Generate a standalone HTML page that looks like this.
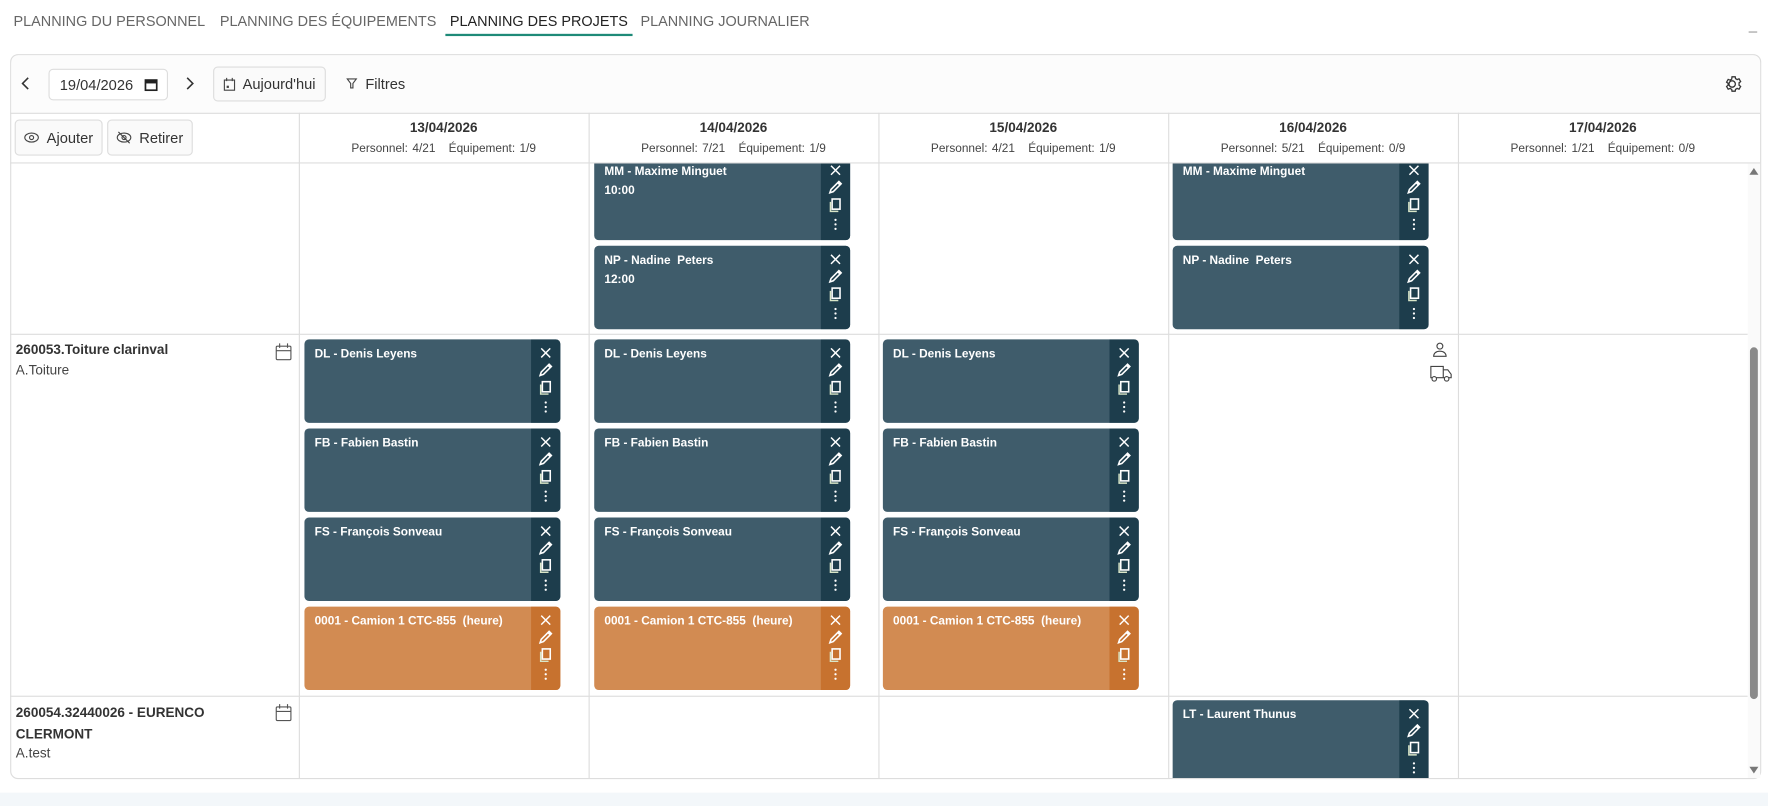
<!DOCTYPE html>
<html><head><meta charset="utf-8"><style>
*{box-sizing:border-box;margin:0;padding:0}
html,body{width:1768px;height:806px;overflow:hidden;background:#fff;font-family:"Liberation Sans",Arial,sans-serif}
#s{position:absolute;left:0;top:0;width:1568px;height:715px;transform:scale(1.12755);transform-origin:0 0;background:#fff}
.a{position:absolute}
.tab{position:absolute;top:11px;font-size:12.8px;color:#666;letter-spacing:0}
.btn{position:absolute;border:1px solid #ddd;border-radius:4px;background:#fafafa;font-size:13px;color:#333;display:flex;align-items:center;justify-content:center;gap:6px}
.vl{position:absolute;top:100px;width:1px;height:590px;background:#ddd}
.hl{position:absolute;left:9px;height:1px;background:#ddd}
.dh{position:absolute;top:100px;width:257px;text-align:center}
.dh b{display:block;font-size:12px;color:#333;margin-top:6px}
.dh span{display:block;font-size:10.5px;color:#444;margin-top:6px;word-spacing:1px}
.card{position:absolute;width:227px;height:74px;background:#3f5c6b;border-radius:4px;overflow:hidden;color:#fff;font-size:10.5px;font-weight:bold}
.card .t{position:absolute;left:9px;top:7px}
.card .h{position:absolute;left:9px;top:24px}
.card .st{position:absolute;right:0;top:0;width:26px;height:100%;background:#1d3d4c}
.card.o{background:#d28b52}
.card.o .st{background:#c7722f}
.st svg{position:absolute;left:6px}
</style></head><body><div id="s">
<div class="tab" style="left:12px">PLANNING DU PERSONNEL</div>
<div class="tab" style="left:195px">PLANNING DES ÉQUIPEMENTS</div>
<div class="tab" style="left:399px;color:#222">PLANNING DES PROJETS</div>
<div class="a" style="left:395px;top:30px;width:166px;height:2px;background:#1e8a78"></div>
<div class="tab" style="left:568px">PLANNING JOURNALIER</div>
<div class="a" style="left:1551px;top:14px;font-size:13px;color:#888">_</div>
<div class="a" style="left:0;top:703px;width:1568px;height:12px;background:#f3f7fa"></div>
<div class="a" style="left:9px;top:48px;width:1553px;height:643px;border:1px solid #ddd;border-radius:7px;background:#fff"></div>
<div class="a" style="left:10px;top:49px;width:1551px;height:51px;background:#fcfcfc;border-radius:7px 7px 0 0"></div>
<svg class="a" style="left:17px;top:67px" width="12" height="14"><path d="M8 2 L3 7 L8 12" fill="none" stroke="#333" stroke-width="1.4"/></svg>
<div class="btn" style="left:43px;top:61px;width:106px;height:28px;justify-content:flex-start;padding-left:9px;background:#fff">19/04/2026<svg width="12" height="12" style="margin-left:4px"><rect x="1" y="2" width="10" height="9" fill="none" stroke="#222" stroke-width="1.5"/><rect x="1" y="2" width="10" height="3" fill="#222"/></svg></div>
<svg class="a" style="left:162px;top:67px" width="12" height="14"><path d="M4 2 L9 7 L4 12" fill="none" stroke="#333" stroke-width="1.4"/></svg>
<div class="btn" style="left:189px;top:59px;width:100px;height:31px"><svg width="11" height="12"><rect x="1" y="2" width="9" height="9" fill="none" stroke="#444"/><path d="M3 0v3M8 0v3" stroke="#444"/><rect x="3" y="7" width="2" height="2" fill="#444"/></svg>Aujourd'hui</div>
<div class="a" style="left:307px;top:67px;font-size:13px;color:#333"><svg width="10" height="10" style="margin-right:7px"><path d="M1 1h8L6 5v4H4V5z" fill="none" stroke="#444"/></svg>Filtres</div>
<svg class="a" style="left:1529px;top:66px" width="17" height="17" viewBox="0 0 24 24"><path d="M12 8a4 4 0 100 8 4 4 0 000-8zm8.6 5.5l2 1.5-2 3.5-2.4-1a8 8 0 01-2 1.2L15.8 21h-4l-.4-2.3a8 8 0 01-2-1.2l-2.4 1-2-3.5 2-1.5a8 8 0 010-2.3l-2-1.5 2-3.5 2.4 1a8 8 0 012-1.2L11.8 3h4l.4 2.3a8 8 0 012 1.2l2.4-1 2 3.5-2 1.5a8 8 0 010 2.3z" fill="none" stroke="#333" stroke-width="1.6" transform="translate(-1.8 0)"/></svg>
<div class="hl" style="top:100px;width:1552px"></div>
<div class="hl" style="top:144px;width:1552px"></div>
<div class="btn" style="left:13px;top:106px;width:78px;height:32px"><svg width="14" height="10"><ellipse cx="7" cy="5" rx="6" ry="4" fill="none" stroke="#444"/><circle cx="7" cy="5" r="1.8" fill="none" stroke="#444"/></svg>Ajouter</div>
<div class="btn" style="left:95px;top:106px;width:76px;height:32px"><svg width="14" height="12"><ellipse cx="7" cy="6" rx="6" ry="4" fill="none" stroke="#444"/><circle cx="7" cy="6" r="1.8" fill="none" stroke="#444"/><path d="M2 1l10 10" stroke="#444"/></svg>Retirer</div>
<div class="vl" style="left:265px"></div><div class="vl" style="left:522px"></div><div class="vl" style="left:779px"></div><div class="vl" style="left:1036px"></div><div class="vl" style="left:1293px"></div>
<div class="dh" style="left:265px"><b>13/04/2026</b><span>Personnel: 4/21 &nbsp; Équipement: 1/9</span></div>
<div class="dh" style="left:522px"><b>14/04/2026</b><span>Personnel: 7/21 &nbsp; Équipement: 1/9</span></div>
<div class="dh" style="left:779px"><b>15/04/2026</b><span>Personnel: 4/21 &nbsp; Équipement: 1/9</span></div>
<div class="dh" style="left:1036px"><b>16/04/2026</b><span>Personnel: 5/21 &nbsp; Équipement: 0/9</span></div>
<div class="dh" style="left:1293px"><b>17/04/2026</b><span>Personnel: 1/21 &nbsp; Équipement: 0/9</span></div>
<div class="hl" style="top:296px;width:1541px"></div>
<div class="hl" style="top:617px;width:1541px"></div>
<div class="a" style="left:1550px;top:145px;width:11px;height:545px;background:#fafafa"></div>
<svg class="a" style="left:1551px;top:148px" width="9" height="8"><path d="M0.5 7L4.5 1L8.5 7z" fill="#777"/></svg>
<svg class="a" style="left:1551px;top:679px" width="9" height="8"><path d="M0.5 1L4.5 7L8.5 1z" fill="#777"/></svg>
<div class="a" style="left:1552px;top:308px;width:7px;height:312px;background:#8a8a8a;border-radius:4px"></div>
<div class="a" style="left:14px;top:303px;font-size:12px;font-weight:bold;color:#333">260053.Toiture clarinval</div>
<div class="a" style="left:14px;top:321px;font-size:12px;color:#444">A.Toiture</div>
<div class="a" style="left:14px;top:623px;font-size:12px;font-weight:bold;color:#333;line-height:19px">260054.32440026 - EURENCO<br>CLERMONT</div>
<div class="a" style="left:14px;top:661px;font-size:12px;color:#444">A.test</div>
<svg class="a" style="left:244px;top:304px" width="15" height="16"><rect x="1" y="3" width="13" height="12" rx="1" fill="none" stroke="#555"/><path d="M1 7h13M4 0.5v4M11 0.5v4" stroke="#555"/></svg>
<svg class="a" style="left:244px;top:624px" width="15" height="16"><rect x="1" y="3" width="13" height="12" rx="1" fill="none" stroke="#555"/><path d="M1 7h13M4 0.5v4M11 0.5v4" stroke="#555"/></svg>
<svg class="a" style="left:1270px;top:303px" width="14" height="14"><circle cx="7" cy="4" r="2.6" fill="none" stroke="#444"/><path d="M1.5 13c0-3 2.5-4.5 5.5-4.5s5.5 1.5 5.5 4.5z" fill="none" stroke="#444"/></svg>
<svg class="a" style="left:1268px;top:324px" width="20" height="15"><path d="M1 1h11v10H1zM12 4h4l3 4v3h-7" fill="none" stroke="#444"/><circle cx="4" cy="12" r="2" fill="#fff" stroke="#444"/><circle cx="15" cy="12" r="2" fill="#fff" stroke="#444"/></svg>
<div class="a" style="left:10px;top:145px;width:1540px;height:545px;overflow:hidden">
<div id="cards" style="position:absolute;left:-10px;top:-145px"></div>
</div>
</div>
<script>
var ic='<svg style="top:5px" width="14" height="14"><path d="M3 3l8 8M11 3l-8 8" stroke="#fff" stroke-width="1.3"/></svg>'+
'<svg style="top:20px" width="14" height="14"><path d="M2 12l1-3 7-7 2 2-7 7z M9 3l2 2" fill="none" stroke="#fff" stroke-width="1.4"/></svg>'+
'<svg style="top:36px" width="14" height="14"><rect x="4" y="1.5" width="7" height="9" fill="none" stroke="#fff" stroke-width="1.4"/><path d="M2.5 4v8.5h7" fill="none" stroke="#d9e6c8" stroke-width="1.3"/></svg>'+
'<svg style="top:53px" width="14" height="14"><circle cx="7" cy="3" r="1" fill="#fff"/><circle cx="7" cy="7" r="1" fill="#fff"/><circle cx="7" cy="11" r="1" fill="#fff"/></svg>';
function c(x,y,t,h,o,hh){return '<div class="card'+(o?' o':'')+'" style="left:'+x+'px;top:'+y+'px;height:'+(hh||74)+'px"><div class="t">'+t+'</div>'+(h?'<div class="h">'+h+'</div>':'')+'<div class="st">'+ic+'</div></div>';}
var s='';
s+=c(527,139,'MM - Maxime Minguet','10:00',0,74).replace('top:7px','top:6px');
s+=c(527,218,'NP - Nadine&nbsp; Peters','12:00');
s+=c(1040,139,'MM - Maxime Minguet','',0,74);
s+=c(1040,218,'NP - Nadine&nbsp; Peters','');
[270,527,783].forEach(function(x){
s+=c(x,301,'DL - Denis Leyens');s+=c(x,380,'FB - Fabien Bastin');s+=c(x,459,'FS - François Sonveau');s+=c(x,538,'0001 - Camion 1 CTC-855&nbsp; (heure)','',1);});
s+=c(1040,621,'LT - Laurent Thunus');
document.getElementById('cards').innerHTML=s;
</script>
</body></html>
